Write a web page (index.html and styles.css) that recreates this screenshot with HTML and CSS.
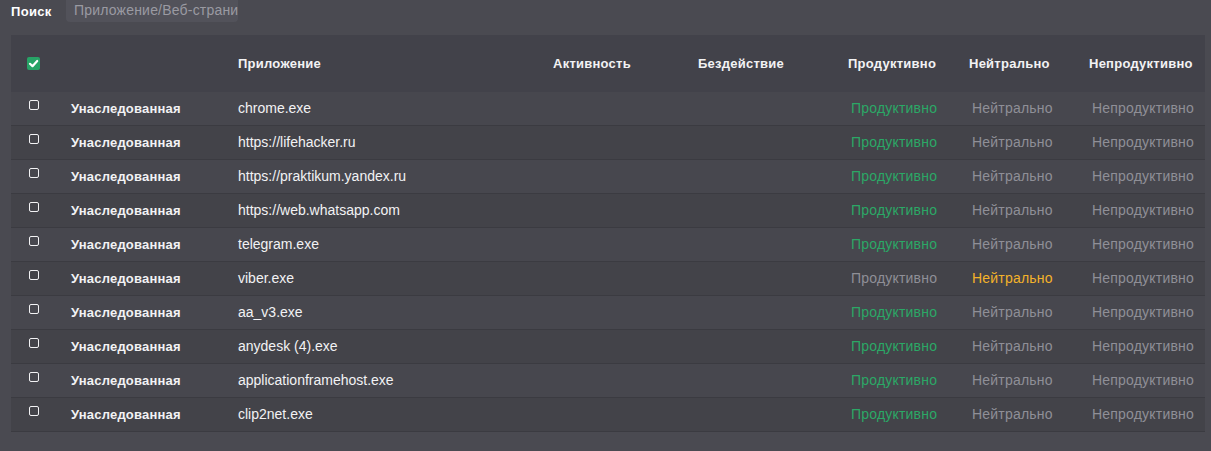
FILE: index.html
```html
<!DOCTYPE html>
<html lang="ru">
<head>
<meta charset="utf-8">
<title>Приложения</title>
<link rel="stylesheet" href="styles.css">
</head>
<body>
<div class="toolbar">
  <span class="search-label">Поиск</span>
  <div class="search-input">Приложение/Веб-страница</div>
</div>
<div class="table">
  <div class="row head">
    <div class="cell cb"><span class="check on"><svg viewBox="0 0 13 13" width="13" height="13"><path d="M3 6.8 L5.5 9.2 L10.2 4" fill="none" stroke="#fff" stroke-width="2.2" stroke-linecap="round" stroke-linejoin="round"/></svg></span></div>
    <div class="cell"></div>
    <div class="cell">Приложение</div>
    <div class="cell">Активность</div>
    <div class="cell">Бездействие</div>
    <div class="cell">Продуктивно</div>
    <div class="cell">Нейтрально</div>
    <div class="cell">Непродуктивно</div>
  </div>
  <div class="row"><div class="cell cb"><span class="check"></span></div><div class="cell group">Унаследованная</div><div class="cell">chrome.exe</div><div class="cell"></div><div class="cell"></div><div class="cell st prod">Продуктивно</div><div class="cell st">Нейтрально</div><div class="cell st">Непродуктивно</div></div>
  <div class="row"><div class="cell cb"><span class="check"></span></div><div class="cell group">Унаследованная</div><div class="cell">https://lifehacker.ru</div><div class="cell"></div><div class="cell"></div><div class="cell st prod">Продуктивно</div><div class="cell st">Нейтрально</div><div class="cell st">Непродуктивно</div></div>
  <div class="row"><div class="cell cb"><span class="check"></span></div><div class="cell group">Унаследованная</div><div class="cell">https://praktikum.yandex.ru</div><div class="cell"></div><div class="cell"></div><div class="cell st prod">Продуктивно</div><div class="cell st">Нейтрально</div><div class="cell st">Непродуктивно</div></div>
  <div class="row"><div class="cell cb"><span class="check"></span></div><div class="cell group">Унаследованная</div><div class="cell">https://web.whatsapp.com</div><div class="cell"></div><div class="cell"></div><div class="cell st prod">Продуктивно</div><div class="cell st">Нейтрально</div><div class="cell st">Непродуктивно</div></div>
  <div class="row"><div class="cell cb"><span class="check"></span></div><div class="cell group">Унаследованная</div><div class="cell">telegram.exe</div><div class="cell"></div><div class="cell"></div><div class="cell st prod">Продуктивно</div><div class="cell st">Нейтрально</div><div class="cell st">Непродуктивно</div></div>
  <div class="row"><div class="cell cb"><span class="check"></span></div><div class="cell group">Унаследованная</div><div class="cell">viber.exe</div><div class="cell"></div><div class="cell"></div><div class="cell st">Продуктивно</div><div class="cell st neut">Нейтрально</div><div class="cell st">Непродуктивно</div></div>
  <div class="row"><div class="cell cb"><span class="check"></span></div><div class="cell group">Унаследованная</div><div class="cell">aa_v3.exe</div><div class="cell"></div><div class="cell"></div><div class="cell st prod">Продуктивно</div><div class="cell st">Нейтрально</div><div class="cell st">Непродуктивно</div></div>
  <div class="row"><div class="cell cb"><span class="check"></span></div><div class="cell group">Унаследованная</div><div class="cell">anydesk (4).exe</div><div class="cell"></div><div class="cell"></div><div class="cell st prod">Продуктивно</div><div class="cell st">Нейтрально</div><div class="cell st">Непродуктивно</div></div>
  <div class="row"><div class="cell cb"><span class="check"></span></div><div class="cell group">Унаследованная</div><div class="cell">applicationframehost.exe</div><div class="cell"></div><div class="cell"></div><div class="cell st prod">Продуктивно</div><div class="cell st">Нейтрально</div><div class="cell st">Непродуктивно</div></div>
  <div class="row"><div class="cell cb"><span class="check"></span></div><div class="cell group">Унаследованная</div><div class="cell">clip2net.exe</div><div class="cell"></div><div class="cell"></div><div class="cell st prod">Продуктивно</div><div class="cell st">Нейтрально</div><div class="cell st">Непродуктивно</div></div>
</div>
</body>
</html>
```
FILE: styles.css
```css
html, body {
  margin: 0;
  padding: 0;
  background: #4a4a51;
  font-family: "Liberation Sans", Arial, sans-serif;
  font-size: 14px;
  color: #f2f2f4;
}
.toolbar {
  display: flex;
  align-items: flex-start;
  height: 35px;
  padding-left: 11px;
}
.search-label {
  font-weight: bold;
  font-size: 13px;
  letter-spacing: 0.3px;
  color: #ffffff;
  padding-top: 4px;
  width: 55px;
}
.search-input {
  width: 164px;
  height: 22px;
  padding-left: 8px;
  line-height: 21px;
  background: #52525a;
  border-radius: 0 0 4px 4px;
  color: #9a9aa2;
  font-size: 14px;
  letter-spacing: 0.2px;
  overflow: hidden;
  white-space: nowrap;
}
.table {
  margin-left: 11px;
  width: 1194px;
}
.row {
  display: grid;
  grid-template-columns: 60px 167px 315px 145px 150px 121px 120px 116px;
  height: 33px;
  border-bottom: 1px solid #3b3b41;
  background: #47474e;
}
.row:nth-child(odd) {
  background: #434349;
}
.row.head {
  height: 57px;
  border-bottom: none;
  background: #42424a;
  font-weight: bold;
  font-size: 13px;
  letter-spacing: 0.25px;
}
.cell {
  display: flex;
  align-items: center;
  white-space: nowrap;
}
.row:not(.head) .cell {
  padding-bottom: 1px;
}
.cell.cb {
  padding-left: 16px;
}
.row:not(.head) .cell.cb {
  align-items: flex-start;
  padding-top: 8px;
  padding-left: 18px;
}
.group {
  font-weight: bold;
  font-size: 13px;
  letter-spacing: 0.2px;
}
.st {
  padding-left: 3px;
  color: #8f8f97;
  letter-spacing: 0.2px;
}
.st.prod { color: #2ba866; }
.st.neut { color: #f3b22a; }
.check {
  display: inline-block;
  width: 8px;
  height: 8px;
  border: 1.5px solid #f2f2f4;
  border-radius: 2px;
}
.check.on {
  width: 13px;
  height: 13px;
  border: none;
  border-radius: 2px;
  background: #27a366;
}
.check.on svg { display: block; }
```
